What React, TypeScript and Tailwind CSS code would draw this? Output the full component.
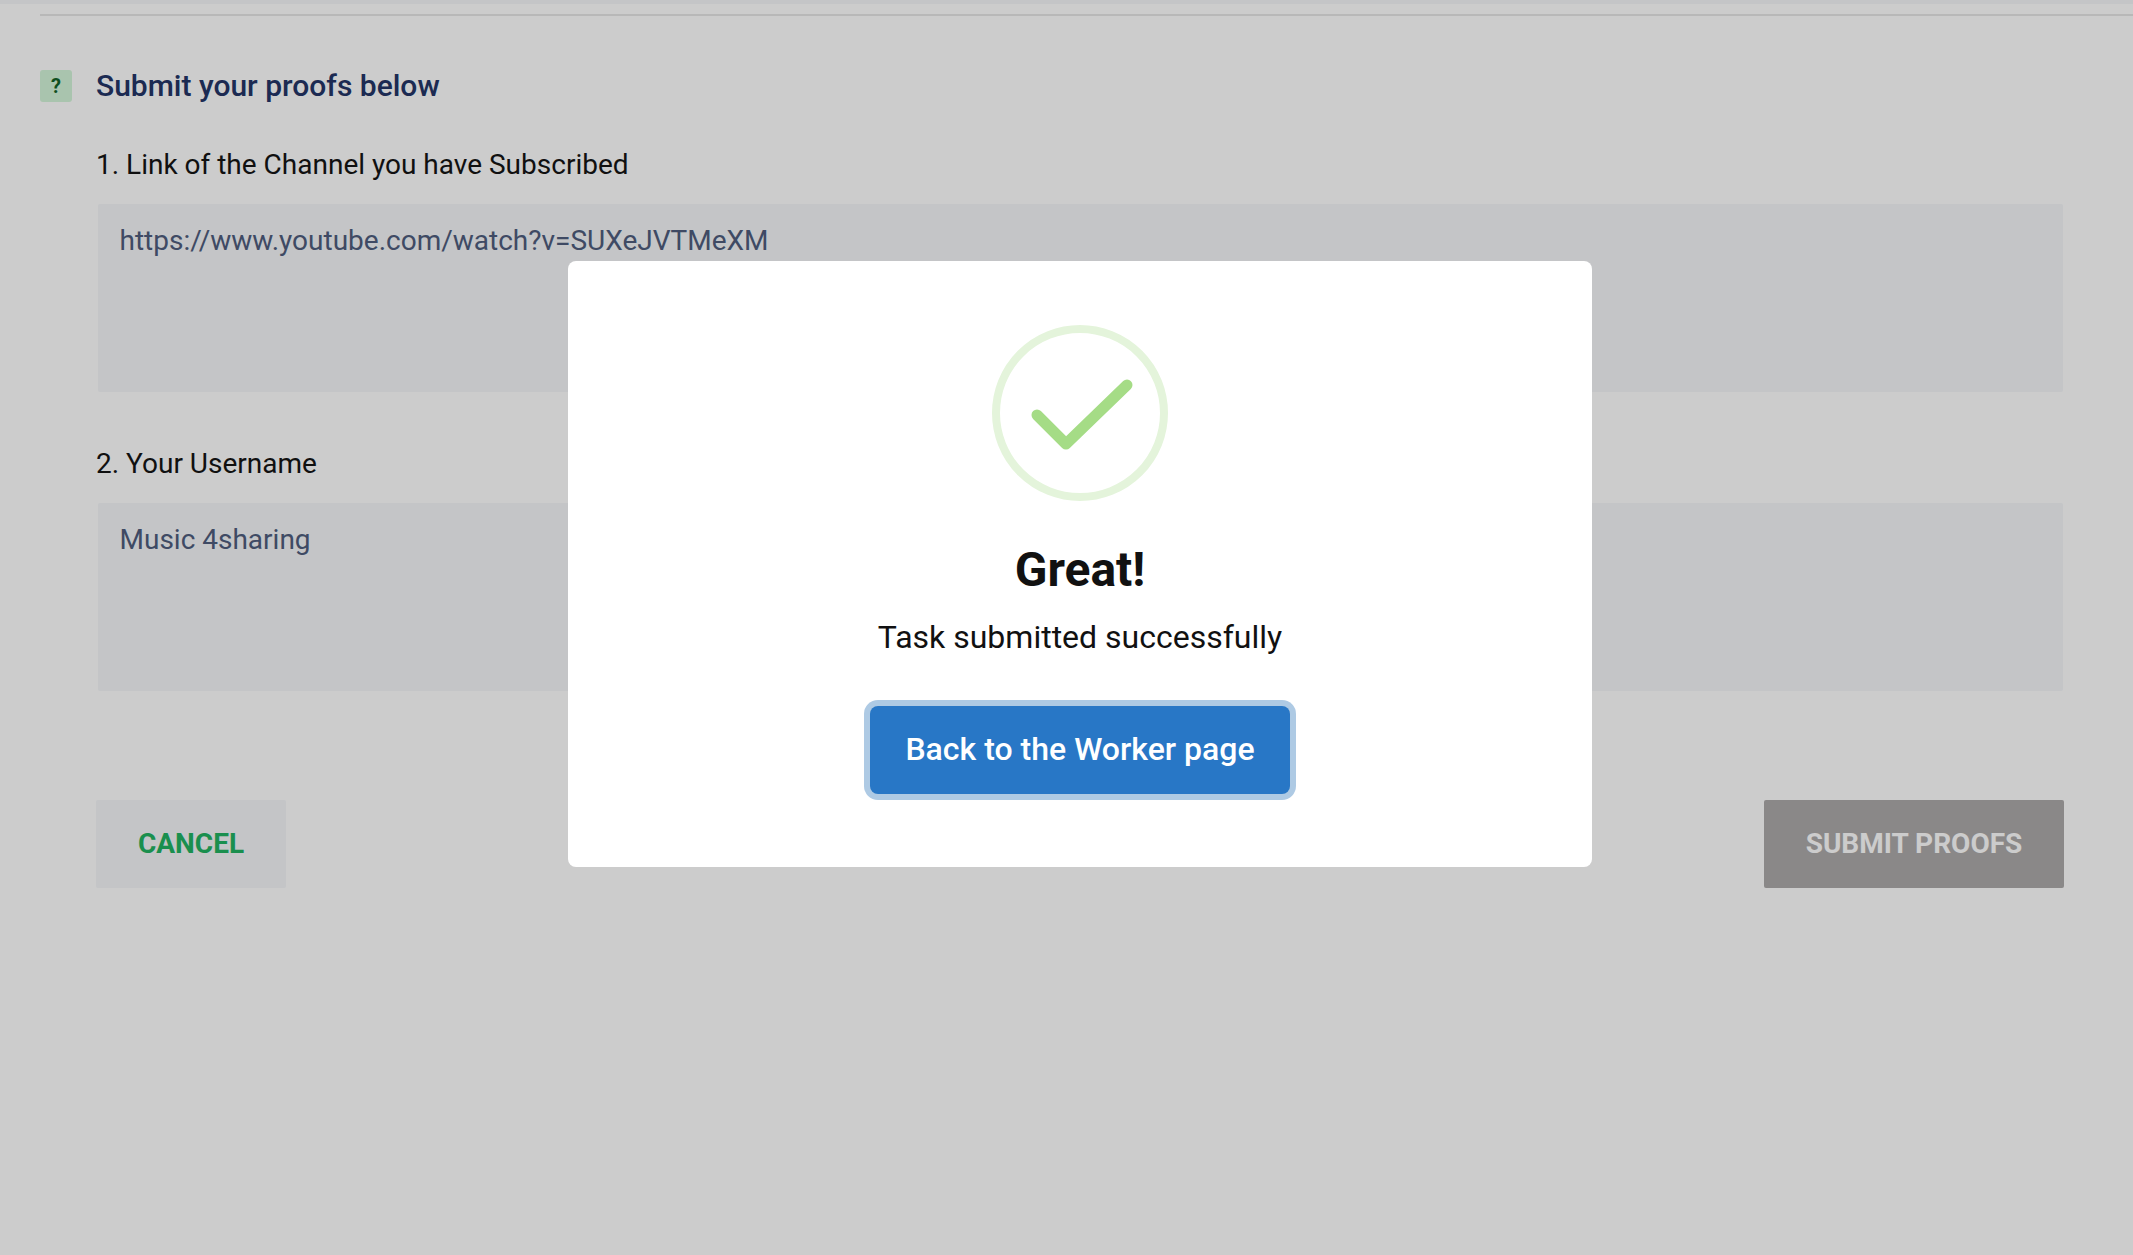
import React from 'react';

const roboto = { fontFamily: 'Roboto, sans-serif' };

const ProofField = ({ label, value }: { label: string; value: string }) => (
  <div>
    <div className="h-9 pt-px text-[28px] leading-9 text-[#151515]">{label}</div>
    <div className="mt-[22px] ml-[1.5px] mr-[1.5px] h-[188px] rounded-[2px] bg-[#f5f7f9] px-[22px] pt-[19px] text-[28px] leading-9 text-[#4f5d7d]">
      {value}
    </div>
  </div>
);

const SuccessIcon = () => (
  <svg width="176" height="176" viewBox="0 0 176 176" fill="none">
    <circle cx="88" cy="88" r="84" stroke="#e4f4db" strokeWidth="8" />
    <path
      d="M45 90 L74 119 L135 60"
      stroke="#a5dc86"
      strokeWidth="11"
      strokeLinecap="round"
      strokeLinejoin="round"
    />
  </svg>
);

export default function App() {
  return (
    <div className="relative h-[1255px] w-full overflow-hidden bg-white" style={roboto}>
      <div className="h-1 bg-[#f5f7f9]" />
      <div className="mt-2.5 ml-10 h-[2px] bg-[#e6e6e6]" />

      <div className="pl-10 pr-[69px] pt-[54px]">
        <div className="flex items-center gap-6">
          <div className="flex h-8 w-8 items-center justify-center rounded-[3px] bg-[#d4f6da] text-[20px] font-bold text-[#116328]">
            ?
          </div>
          <h2 className="text-[30px] font-medium leading-8 text-[#233567]">Submit your proofs below</h2>
        </div>

        <div className="pl-14">
          <div className="mt-11 flex flex-col gap-[53px]">
            <ProofField label="1. Link of the Channel you have Subscribed" value="https://www.youtube.com/watch?v=SUXeJVTMeXM" />
            <ProofField label="2. Your Username" value="Music 4sharing" />
          </div>

          <div className="mt-[109px] flex justify-between">
            <button className="h-[88px] w-[190px] rounded-[2px] bg-[#f5f7f9] text-[28px] font-bold text-[#21b362]">
              CANCEL
            </button>
            <button className="h-[88px] w-[300px] rounded-[2px] bg-[#adaaaa] text-[28px] font-bold text-white">
              SUBMIT PROOFS
            </button>
          </div>
        </div>
      </div>

      <div className="absolute inset-0 flex items-start justify-center bg-black/20 pl-[27px] pt-[261px]">
        <div className="flex h-[606px] w-[1024px] flex-col items-center rounded-[8px] bg-white pt-16">
          <SuccessIcon />
          <h1 className="mt-[39px] text-[48px] font-bold leading-[60px] text-[#111111]">Great!</h1>
          <p className="mt-[17px] text-[32px] leading-10 text-[#111111]">Task submitted successfully</p>
          <button className="mt-[49px] h-[88px] w-[420px] rounded-[8px] bg-[#2877c6] pb-0.5 text-[32px] font-medium text-white ring-[6px] ring-[#aecae4]">
            Back to the Worker page
          </button>
        </div>
      </div>
    </div>
  );
}
